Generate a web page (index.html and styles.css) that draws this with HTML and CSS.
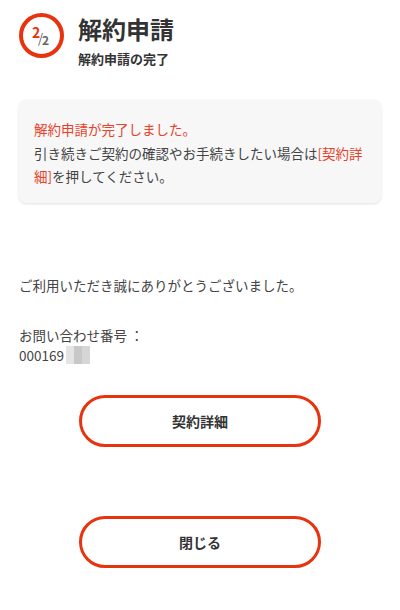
FILE: index.html
```html
<!DOCTYPE html>
<html lang="ja">
<head>
<meta charset="utf-8">
<link rel="stylesheet" href="styles.css">
</head>
<body>
<div class="page">
  <header class="head">
    <div class="step"><span class="cur">2</span><span class="sl">/</span><span class="tot">2</span></div>
    <div class="titles">
      <h1 class="title">解約申請</h1>
      <p class="sub">解約申請の完了</p>
    </div>
  </header>
  <section class="card">
    <p class="red">解約申請が完了しました。</p>
    <p>引き続きご契約の確認やお手続きしたい場合は<span class="red">[契約詳細]</span>を押してください。</p>
  </section>
  <p class="thanks">ご利用いただき誠にありがとうございました。</p>
  <div class="inq">
    <p>お問い合わせ番号 ：</p>
    <p class="num">000169<span class="blur"><i class="b1"></i><i class="b2"></i><i class="b3"></i></span></p>
  </div>
  <div class="btnwrap"><button class="btn">契約詳細</button></div>
  <div class="btnwrap second"><button class="btn">閉じる</button></div>
</div>
</body>
</html>
```
FILE: styles.css
```css
* { box-sizing: border-box; }
html, body { margin: 0; padding: 0; background: #fff; }
body { font-family: "Noto Sans CJK JP", "Noto Sans", sans-serif; color: #333; }
p { margin: 0; }
.page { width: 400px; padding: 13px 19px 0 19px; }
.head { display: flex; align-items: flex-start; gap: 14px; }
.step {
  width: 45px; height: 45px; border: 4px solid #e8330f; border-radius: 50%;
  position: relative; flex: none;
}
.step span { position: absolute; font-weight: 700; line-height: 1; }
.step .cur { color: #e8330f; font-size: 14px; left: 9px; top: 8px; }
.step .sl { color: #666; font-size: 13px; left: 15px; top: 14px; font-weight: 400; }
.step .tot { color: #666; font-size: 12px; left: 19px; top: 17px; }
.titles { padding-top: 1px; }
.title { margin: 0; font-size: 24px; font-weight: 700; line-height: 30px; color: #333; }
.sub { font-size: 13px; font-weight: 700; line-height: 20px; margin-top: 5px; color: #333; }
.card {
  margin-top: 31px; background: #f7f7f7; border-radius: 7px;
  box-shadow: 0 1px 3px rgba(0,0,0,0.12);
  padding: 18px 10px 14px 15px; font-size: 13.5px; line-height: 23.5px; color: #444;
}
.red { color: #e8412a; }
.thanks { margin-top: 71px; font-size: 13.5px; line-height: 22px; color: #444; }
.inq { margin-top: 29px; font-size: 13.5px; line-height: 20px; color: #444; }
.num { display: flex; align-items: center; }
.blur { display: inline-flex; height: 18px; margin-left: 2px; background: #f0f0f0; }
.blur i { display: block; width: 8px; height: 18px; }
.b1 { background: #e4e4e4; }
.b2 { background: #c8c8c8; }
.b3 { background: #d6d6d6; }
.btnwrap { display: flex; justify-content: center; margin-top: 30px; }
.btnwrap.second { margin-top: 69px; }
.btn {
  width: 242px; height: 52px; border: 3px solid #e8330f; border-radius: 26px;
  background: #fff; font-family: inherit; font-size: 14px; font-weight: 700; color: #333;
}
```
